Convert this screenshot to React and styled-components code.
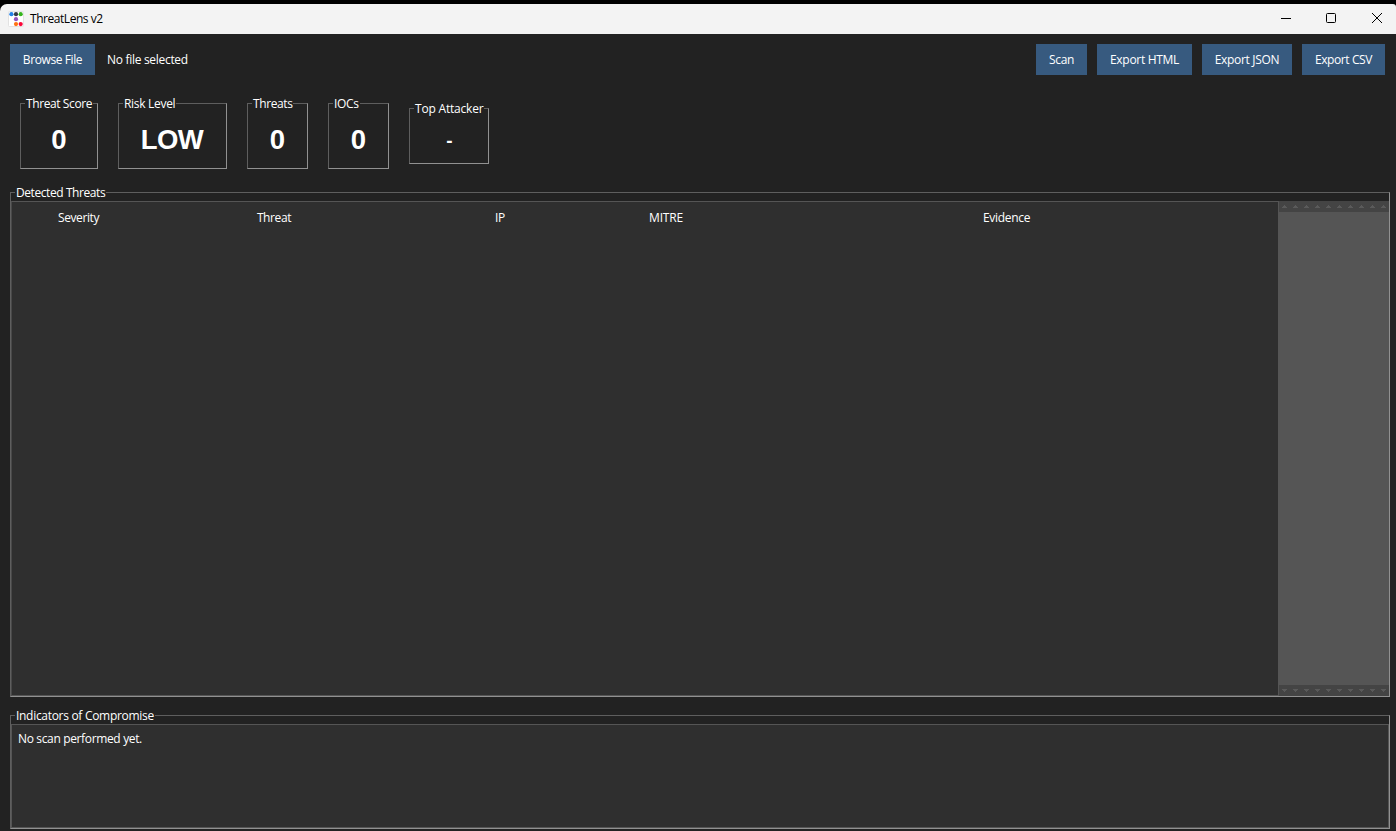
import React from 'react';
import styled, { createGlobalStyle } from 'styled-components';

const GlobalStyle = createGlobalStyle`
  * {
    box-sizing: border-box;
  }
  body {
    margin: 0;
    background: #000;
    color: #fff;
    font: 12px/16px 'Open Sans', 'Noto Sans', sans-serif;
    overflow: hidden;
  }
`;
const Window = styled.div`
  display: flex;
  flex-direction: column;
  height: 831px;
  padding-top: 4px;
`;
const TitleBar = styled.header`
  display: flex;
  align-items: center;
  flex: none;
  height: 30px;
  padding: 0 13px 0 8px;
  background: #f3f3f3;
  color: #000;
  border-radius: 7px 3px 0 0;
`;
const Text = styled.span`
  white-space: nowrap;
  letter-spacing: ${(p) => p.$spacing ?? -0.3}px;
`;
const Title = styled(Text)`
  flex: 1;
  margin-left: 6px;
`;
const WindowButtons = styled.div`
  display: flex;
  gap: 34px;
  margin-top: -2px;
`;
const Client = styled.main`
  flex: 1;
  display: flex;
  flex-direction: column;
  padding: 10px 6px 2px 10px;
  background: #222;
`;
const Toolbar = styled.div`
  display: flex;
  align-items: center;
  gap: 10px;
  height: 31px;
  margin-bottom: 28px;
  padding-right: 5px;
`;
const Button = styled.button`
  display: flex;
  align-items: center;
  justify-content: center;
  width: ${(p) => p.$width}px;
  height: 31px;
  padding: 0;
  border: 0;
  background: #375a7f;
  color: #fff;
  font: inherit;
`;
const FileName = styled(Text)`
  flex: 1;
  margin-left: 2px;
`;
const Cards = styled.div`
  display: flex;
  align-items: center;
  gap: 20px;
  height: 66px;
  margin: 0 0 23px 10px;
`;
const Frame = styled.section`
  display: flex;
  flex-direction: column;
  width: ${(p) => (p.$width ? `${p.$width}px` : 'auto')};
  height: ${(p) => p.$height}px;
  border: 1px solid;
  border-color: #5e5e5e #919191 #919191 #5e5e5e;

  & + & {
    margin-top: 18px;
  }
`;
const Legend = styled.div`
  flex: none;
  align-self: flex-start;
  height: 16px;
  margin: -8px 0 0 4px;
  padding: 0 1px;
  background: linear-gradient(#222, #222) 0 0 / 100% 9px no-repeat;
`;
const Value = styled.div`
  flex: 1;
  display: flex;
  align-items: center;
  justify-content: center;
  padding: ${(p) => (p.$small ? '2px 0 0 1px' : '0 1px 1px 0')};
  font: bold ${(p) => (p.$small ? 19 : 27.5)}px/30px 'Liberation Sans', sans-serif;
  letter-spacing: ${(p) => (p.$small ? 0 : -0.6)}px;
`;
const Body = styled.div`
  flex: 1;
  display: flex;
`;
const Table = styled.div`
  flex: 1;
  border: 1px solid #555;
  border-left-color: #484848;
  border-right: 0;
  background: #2f2f2f;
`;
const HeadRow = styled.div`
  display: grid;
  grid-template-columns: 133px 258px 194px 138px 1fr;
  padding-top: 8px;
  text-align: center;
`;
const ScrollBar = styled.div`
  display: flex;
  flex-direction: column;
  width: 111px;
  border-left: 1px solid #555;
`;
const Thumb = styled.div`
  flex: 1;
  background: #555;
`;
const Arrows = styled.svg`
  display: block;
  flex: none;
  background: #444;
`;
const Output = styled.div`
  flex: 1;
  padding: 6px;
  border: 1px solid #555;
  background: #2f2f2f;
`;

const cards = [
  { label: 'Threat Score', value: '0', width: 78, spacing: -0.4 },
  { label: 'Risk Level', value: 'LOW', width: 109 },
  { label: 'Threats', value: '0', width: 61, spacing: -0.4 },
  { label: 'IOCs', value: '0', width: 61 },
  { label: 'Top Attacker', value: '-', width: 80, small: true, spacing: -0.2 },
];
const columns = [
  { label: 'Severity', spacing: -0.4 },
  { label: 'Threat', spacing: -0.4 },
  { label: 'IP' },
  { label: 'MITRE', spacing: -0.2 },
  { label: 'Evidence' },
];
const actions = [
  { label: 'Scan', width: 51 },
  { label: 'Export HTML', width: 95 },
  { label: 'Export JSON', width: 90 },
  { label: 'Export CSV', width: 83, spacing: -0.4 },
];

const AppIcon = () => (
  <svg width="16" height="16" viewBox="0 0 16 16">
    <rect x="0.5" y="0.5" width="15" height="15" rx="1" fill="#fff" stroke="#e2e2e2" />
    <circle cx="3.4" cy="3.2" r="2.1" fill="#2180e8" />
    <circle cx="8" cy="3.2" r="2.1" fill="#343a46" />
    <circle cx="12.7" cy="3.2" r="2.1" fill="#35b51c" />
    <circle cx="8" cy="8.2" r="2.1" fill="#9452bd" />
    <circle cx="8" cy="13.1" r="2.1" fill="#ff7212" />
    <circle cx="12.7" cy="13.1" r="2.1" fill="#fb0639" />
  </svg>
);

const ArrowStrip = ({ down }) => (
  <Arrows width="110" height="11" shapeRendering="crispEdges">
    {Array.from({ length: 10 }, (_, i) => (
      <path
        key={i}
        transform={`translate(${i * 11 + 3} 4)`}
        d={down ? 'M0 0h5v1h-5zM1 1h3v1h-3zM2 2h1v1h-1z' : 'M2 0h1v1h-1zM1 1h3v1h-3zM0 2h5v1h-5z'}
        fill="#5a5a5a"
      />
    ))}
  </Arrows>
);

const App = () => (
  <Window>
    <GlobalStyle />
    <TitleBar>
      <AppIcon />
      <Title $spacing={-0.45}>ThreatLens v2</Title>
      <WindowButtons>
        <svg width="12" height="12" stroke="#000" fill="none">
          <path d="M2 6.5h10" />
        </svg>
        <svg width="12" height="12" stroke="#000" fill="none">
          <rect x="1.5" y="1.5" width="9" height="9" rx="1" />
        </svg>
        <svg width="12" height="12" stroke="#000" fill="none">
          <path d="M1 1l10 10M11 1L1 11" />
        </svg>
      </WindowButtons>
    </TitleBar>
    <Client>
      <Toolbar>
        <Button $width={85}>
          <Text $spacing={-0.4}>Browse File</Text>
        </Button>
        <FileName>No file selected</FileName>
        {actions.map((b) => (
          <Button key={b.label} $width={b.width}>
            <Text $spacing={b.spacing}>{b.label}</Text>
          </Button>
        ))}
      </Toolbar>
      <Cards>
        {cards.map((c) => (
          <div key={c.label}>
            <Frame $width={c.width} $height={c.small ? 56 : 66}>
              <Legend>
                <Text $spacing={c.spacing}>{c.label}</Text>
              </Legend>
              <Value $small={c.small}>{c.value}</Value>
            </Frame>
          </div>
        ))}
      </Cards>
      <Frame $height={505}>
        <Legend>
          <Text $spacing={-0.42}>Detected Threats</Text>
        </Legend>
        <Body>
          <Table>
            <HeadRow>
              {columns.map((c) => (
                <Text key={c.label} $spacing={c.spacing}>
                  {c.label}
                </Text>
              ))}
            </HeadRow>
          </Table>
          <ScrollBar>
            <ArrowStrip />
            <Thumb />
            <ArrowStrip down />
          </ScrollBar>
        </Body>
      </Frame>
      <Frame $height={114}>
        <Legend>
          <Text>Indicators of Compromise</Text>
        </Legend>
        <Output>
          <Text $spacing={-0.35}>No scan performed yet.</Text>
        </Output>
      </Frame>
    </Client>
  </Window>
);

export default App;
